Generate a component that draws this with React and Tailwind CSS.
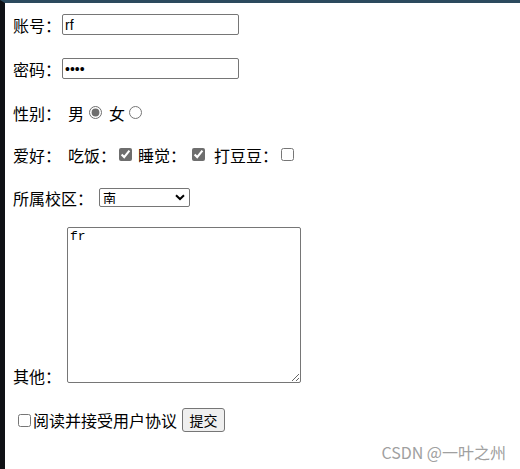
import { useState } from 'react'

export default function App() {
  const [remark, setRemark] = useState('fr')

  return (
    <div className="relative min-h-[469px] bg-white border-l-[5px] border-l-[#0f1115] border-t-[3px] border-t-[#2c4a5e] pl-[8px] text-[16px] text-black font-['Noto_Sans_CJK_SC',sans-serif]">
      {/* 账号 */}
      <div className="flex items-center h-[21px] mt-[11px] leading-none">
        <span className="w-[49px]">账号：</span>
        <input
          type="text"
          defaultValue="rf"
          className="w-[177px] h-[21px] border border-[#767676] rounded-[2px] px-[2px] text-[14px] font-['Liberation_Sans',sans-serif] outline-none"
        />
      </div>

      {/* 密码 */}
      <div className="flex items-center h-[21px] mt-[23px] leading-none">
        <span className="w-[49px]">密码：</span>
        <input
          type="password"
          defaultValue="1234"
          className="w-[177px] h-[21px] border border-[#767676] rounded-[2px] px-[2px] text-[14px] font-['Liberation_Sans',sans-serif] outline-none"
        />
      </div>

      {/* 性别 */}
      <div className="flex items-center h-[21px] mt-[23px] leading-none">
        <span className="w-[55px]">性别：</span>
        <span>男</span>
        <input type="radio" name="sex" defaultChecked className="w-[13px] h-[13px] ml-[5px] mr-[7px] accent-[#6e6e6e]" />
        <span>女</span>
        <input type="radio" name="sex" className="w-[13px] h-[13px] ml-[4px] accent-[#6e6e6e]" />
      </div>

      {/* 爱好 */}
      <div className="flex items-center h-[21px] mt-[21px] leading-none">
        <span className="w-[55px]">爱好：</span>
        <span>吃饭：</span>
        <input type="checkbox" defaultChecked className="w-[13px] h-[13px] ml-[3px] mr-[6px] accent-[#6e6e6e]" />
        <span>睡觉：</span>
        <input type="checkbox" defaultChecked className="w-[13px] h-[13px] ml-[6px] mr-[9px] accent-[#6e6e6e]" />
        <span>打豆豆：</span>
        <input type="checkbox" className="w-[13px] h-[13px] ml-[3px] accent-[#6e6e6e]" />
      </div>

      {/* 所属校区 */}
      <div className="flex items-center h-[21px] mt-[22px] leading-none">
        <span className="w-[86px]">所属校区：</span>
        <div className="relative">
          <select
            defaultValue="南"
            className="appearance-none w-[91px] h-[19px] border border-[#767676] rounded-[2px] pl-[3px] text-[13px] leading-none outline-none"
          >
            <option>北</option>
            <option>南</option>
            <option>东</option>
          </select>
          <svg className="absolute right-[5px] top-[6px] pointer-events-none" width="10" height="7" viewBox="0 0 10 7">
            <path d="M1 1.2 L5 5 L9 1.2" fill="none" stroke="#000" strokeWidth="2" />
          </svg>
        </div>
      </div>

      {/* 其他 */}
      <div className="flex items-end mt-[19px]">
        <span className="w-[54px] leading-none mb-[-1px]">其他：</span>
        <textarea
          value={remark}
          onChange={(e) => setRemark(e.target.value)}
          className="w-[234px] h-[156px] border border-[#767676] rounded-[2px] px-[2px] py-[1px] text-[13px] leading-[16px] font-['Liberation_Mono',monospace] outline-none resize"
        />
      </div>

      {/* 协议 + 提交 */}
      <div className="flex items-center h-[24px] mt-[25px] leading-none">
        <input type="checkbox" className="w-[13px] h-[13px] ml-[5px] mr-[2px] accent-[#6e6e6e]" />
        <span>阅读并接受用户协议</span>
        <button className="ml-[5px] w-[43px] h-[24px] bg-[#efefef] border border-[#767676] rounded-[3px] text-[14px] leading-none">
          提交
        </button>
      </div>

      {/* watermark */}
      <div className="absolute right-[14px] bottom-[9px] text-[16px] leading-none text-[#a0a0a0]">
        CSDN @一叶之州
      </div>
    </div>
  )
}
